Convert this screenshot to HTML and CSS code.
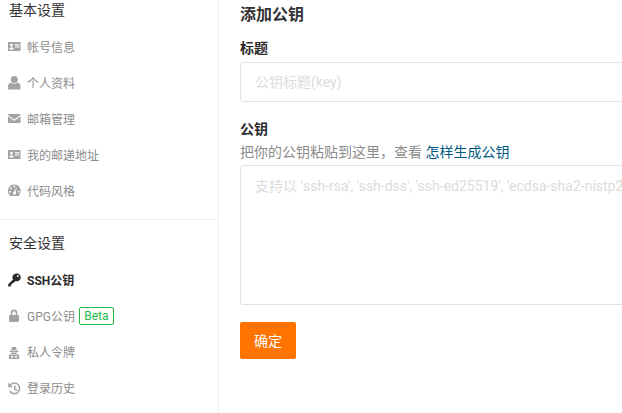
FILE: index.html
```html
<!DOCTYPE html>
<html lang="zh-CN">
<head>
<meta charset="utf-8">
<title>SSH公钥</title>
<link rel="stylesheet" href="styles.css">
</head>
<body>
<div class="page">
  <nav class="sidebar">
    <section class="group group-first">
      <h3 class="group-title">基本设置</h3>
      <ul class="menu">
        <li class="item"><svg class="icon" viewBox="0 0 13 14"><path fill-rule="evenodd" d="M0 2h12.500v9H0zM3.500 3.800a1.400 1.400 0 1 0 0 2.800 1.400 1.400 0 0 0 0-2.800zM1.200 9.500h4.600c0-1.500-1-2.300-2.300-2.300s-2.300.8-2.300 2.300zM7 4.300v1.100h4.300V4.300zM7 6.500v1.100h4.300V6.500z"/></svg><span class="text">帐号信息</span></li>
        <li class="item"><svg class="icon" viewBox="0 0 13 14"><circle cx="6.300" cy="3.600" r="3.500"/><path d="M0 12.300v-1.800C0 8.300 1.300 7 3.200 6.800c.9.600 1.900 1 3.100 1s2.200-.4 3.100-1c1.900.2 3.100 1.500 3.100 3.700v1.800c0 .8-.6 1.300-1.300 1.300H1.300C.6 13.600 0 13.100 0 12.300z"/></svg><span class="text">个人资料</span></li>
        <li class="item"><svg class="icon" viewBox="0 0 13 14"><path d="M0 2h12.500v.9L6.250 7.600 0 2.900zM0 4.200l6.250 4.700 6.250-4.700V11H0z"/></svg><span class="text">邮箱管理</span></li>
        <li class="item"><svg class="icon" viewBox="0 0 13 14"><path fill-rule="evenodd" d="M0 2h12.500v9H0zM3.500 3.800a1.400 1.400 0 1 0 0 2.800 1.400 1.400 0 0 0 0-2.800zM1.200 9.500h4.600c0-1.500-1-2.300-2.300-2.300s-2.300.8-2.300 2.300zM7 4.300v1.100h4.300V4.300zM7 6.500v1.100h4.300V6.500z"/></svg><span class="text">我的邮递地址</span></li>
        <li class="item"><svg class="icon" viewBox="0 0 13 14"><path fill-rule="evenodd" d="M6.300.5a6.300 6.300 0 0 1 5.300 9.700l-.9 1.800H1.900l-.9-1.800A6.300 6.300 0 0 1 6.300.5zM5.500 1.800v1.700h1.600V1.800zM2.800 3.200 1.800 4.300l1.200 1.200 1-1.100zM9 2.800 6.400 7.600a1.500 1.500 0 1 0 1.300.6zM1 7v1.500h1.800V7zM9.800 7v1.500h1.800V7z"/></svg><span class="text">代码风格</span></li>
      </ul>
    </section>
    <section class="group">
      <h3 class="group-title">安全设置</h3>
      <ul class="menu">
        <li class="item item-active"><svg class="icon" viewBox="0 0 13 14"><path fill-rule="evenodd" d="M8.800.5a3.900 3.900 0 1 1-1.200 7.600L6 9.700H4.600v1.400H3.200v1.500L2.200 13.600H.2v-2.400L5 6.400A3.900 3.900 0 0 1 8.800.5zM9.800 2.100a.9.9 0 1 0 0 1.800.9.9 0 0 0 0-1.800z"/></svg><span class="text">SSH公钥</span></li>
        <li class="item"><svg class="icon" viewBox="0 0 13 14"><path fill-rule="evenodd" d="M2.700 6V3.900a3.300 3.300 0 0 1 6.600 0V6h.5c.6 0 1.200.5 1.200 1.200v4.600c0 .7-.6 1.200-1.200 1.200H2.200c-.6 0-1.200-.5-1.200-1.200V7.200C1 6.500 1.600 6 2.200 6zM4.300 6h3.400V3.900a1.700 1.700 0 0 0-3.400 0z"/></svg><span class="text">GPG公钥</span><span class="badge">Beta</span></li>
        <li class="item"><svg class="icon" viewBox="0 0 13 14"><path fill-rule="evenodd" d="M4 2h4l1 3.200H3zM1.500 5.800h9v1.100h-9zM3.200 7.400h5.600v1.700H3.200zM1 9.600h10V14H1zM3 11v1.500h2.200V11zM6.800 11v1.500H9V11z"/></svg><span class="text">私人令牌</span></li>
        <li class="item"><svg class="icon icon-history" viewBox="0 0 13 14"><path class="history-arc" d="M2.400 3.800A5.300 5.300 0 1 1 1.800 10"/><path class="history-hand" d="M6.800 4.500v3.600l2.300 1.500"/><path d="M.3 1.500v4.800h4.800z"/></svg><span class="text">登录历史</span></li>
      </ul>
    </section>
  </nav>
  <main class="main">
    <h2 class="title">添加公钥</h2>
    <form class="form">
      <div class="field field-title">
        <label class="label">标题</label>
        <input class="input" type="text" placeholder="公钥标题(key)">
      </div>
      <div class="field field-key">
        <label class="label">公钥</label>
        <p class="help">把你的公钥粘贴到这里，查看 <a class="link" href="#">怎样生成公钥</a></p>
        <textarea class="textarea" placeholder="支持以 'ssh-rsa', 'ssh-dss', 'ssh-ed25519', 'ecdsa-sha2-nistp256', 'ecdsa-sha2-nistp384', or 'ecdsa-sha2-nistp521' 开头"></textarea>
      </div>
      <button class="submit" type="button">确定</button>
    </form>
  </main>
</div>
</body>
</html>
```
FILE: styles.css
```css
* { box-sizing: border-box; }
html, body {
  margin: 0;
  height: 100%;
  overflow: hidden;
  background: #fff;
}
body {
  font-family: Roboto, "Noto Sans CJK SC", sans-serif;
  font-size: 12px;
  color: #2b2b2b;
}
.page {
  display: flex;
  height: 413px;
  width: 622px;
  overflow: hidden;
}
.sidebar {
  flex: 0 0 219px;
  border-right: 1px solid #f0f0f0;
}
.group-first {
  height: 220px;
  border-bottom: 1px solid #f0f0f0;
  margin-bottom: 13px;
}
.group-title {
  margin: 0 0 9px;
  padding-left: 9px;
  font-size: 14px;
  font-weight: 400;
  line-height: 20px;
  color: #333;
}
.menu {
  list-style: none;
  margin: 0;
  padding: 0;
}
.item {
  display: flex;
  align-items: center;
  height: 36px;
  padding-left: 8px;
  color: #8c8c8c;
  font-size: 12px;
}
.text { margin-bottom: 2px; }
.icon {
  flex: none;
  width: 13px;
  height: 14px;
  margin-right: 6px;
  fill: #a3a3a3;
}
.history-arc, .history-hand {
  fill: none;
  stroke: #a3a3a3;
  stroke-width: 1.500;
}
.item-active {
  color: #2b2b2b;
  font-weight: 700;
}
.item-active .icon { fill: #2b2b2b; }
.badge {
  margin-left: 4px;
  width: 35px;
  height: 18px;
  line-height: 16px;
  text-align: center;
  font-size: 12px;
  color: #21ba45;
  border: 1px solid #21ba45;
  border-radius: 2px;
}
.main {
  flex: none;
  width: 640px;
  padding-left: 21px;
}
.title {
  margin: 0;
  height: 29px;
  font-size: 16px;
  font-weight: 700;
  line-height: 30px;
  color: #333;
}
.label {
  display: block;
  height: 20px;
  margin-top: 9px;
  font-size: 14px;
  font-weight: 700;
  line-height: 20px;
  color: #2b2b2b;
}
.field-title { height: 72px; }
.label + .input { margin-top: 4px; }
.input, .textarea {
  display: block;
  width: 100%;
  padding: 0 14px;
  border: 1px solid #e1e1ec;
  border-radius: 3px;
  background: #fff;
  font-family: inherit;
  font-size: 14px;
  outline: none;
}
.input { height: 40px; }
.textarea {
  height: 140px;
  padding-top: 10px;
  resize: none;
  overflow: hidden;
  white-space: pre;
  line-height: 20px;
}
.input::placeholder, .textarea::placeholder { color: #dcdcdc; opacity: 1; }
.help {
  margin: 3px 0 3px;
  font-size: 14px;
  line-height: 20px;
  color: #8c8c8c;
}
.link { color: #005980; text-decoration: none; }
.submit {
  display: block;
  margin-top: 17px;
  width: 56px;
  height: 37px;
  padding: 0 0 2px;
  border: 0;
  border-radius: 2px;
  background: #ff7300;
  color: #fff;
  font-family: inherit;
  font-size: 14px;
}
```
